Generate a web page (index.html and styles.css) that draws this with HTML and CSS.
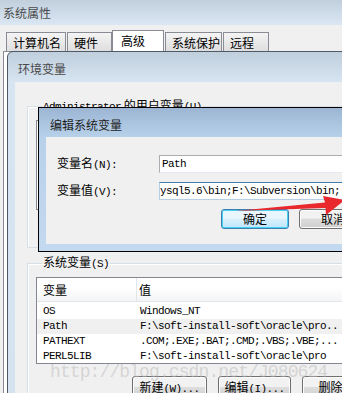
FILE: index.html
```html
<!DOCTYPE html>
<html lang="zh-CN">
<head>
    <meta charset="UTF-8">
    <title>编辑系统变量</title>
    <link rel="stylesheet" href="styles.css">
</head>
<body>
    <!-- System properties window (back) -->
    <div class="win sys">
        <div class="title">系统属性</div>
        <div class="tabs">
            <div class="tab t1">计算机名</div>
            <div class="tab t2">硬件</div>
            <div class="tab t3 on">高级</div>
            <div class="tab t4">系统保护</div>
            <div class="tab t5">远程</div>
        </div>
        <div class="page"></div>
    </div>

    <!-- Environment variables window -->
    <div class="win env">
        <div class="title">环境变量</div>
        <div class="body">
            <fieldset class="group user">
                <legend><span class="m">Administrator</span> 的用户变量<span class="m">(U)</span></legend>
                <div class="list short"></div>
            </fieldset>

            <fieldset class="group sysvars">
                <legend>系统变量<span class="m">(S)</span></legend>
                <div class="list">
                    <div class="head">
                        <div class="c1">变量</div>
                        <div class="c2">值</div>
                    </div>
                    <div class="rows m">
                        <div class="row"><div class="c1">OS</div><div class="c2">Windows_NT</div></div>
                        <div class="row sel"><div class="c1">Path</div><div class="c2">F:\soft-install-soft\oracle\pro..</div></div>
                        <div class="row"><div class="c1">PATHEXT</div><div class="c2">.COM;.EXE;.BAT;.CMD;.VBS;.VBE;...</div></div>
                        <div class="row"><div class="c1">PERL5LIB</div><div class="c2">F:\soft-install-soft\oracle\pro</div></div>
                    </div>
                </div>
                <div class="btns">
                    <div class="btn">新建<span class="m">(W)...</span></div>
                    <div class="btn">编辑<span class="m">(I)...</span></div>
                    <div class="btn">删除<span class="m">(L)</span></div>
                </div>
            </fieldset>
        </div>
    </div>

    <!-- Edit system variable dialog (front) -->
    <div class="win edit">
        <div class="title">编辑系统变量</div>
        <div class="body">
            <div class="field">
                <label>变量名<span class="m">(N):</span></label>
                <div class="input m">Path</div>
            </div>
            <div class="field">
                <label>变量值<span class="m">(V):</span></label>
                <div class="input focus m">ysql5.6\bin;F:\Subversion\bin;</div>
            </div>
            <div class="actions">
                <div class="btn ok">确定</div>
                <div class="btn">取消</div>
            </div>
        </div>
    </div>

    <svg class="arrow" width="110" height="30" viewBox="0 0 110 30">
        <polygon points="0,18 90,9.5 88,3 110,7 91,22 90.5,15" fill="#e8282c"/>
    </svg>

    <div class="mark">http://blog.csdn.net/J080624</div>
</body>
</html>
```

FILE: styles.css
```css
* {
    box-sizing: border-box;
}

body {
    margin: 0;
    width: 342px;
    height: 393px;
    overflow: hidden;
    position: relative;
    background: #f0f0f0;
    font-family: "Noto Sans CJK SC", sans-serif;
    font-size: 12px;
    line-height: 14px;
    color: #000;
}

.m {
    font-family: "Liberation Mono", "Noto Sans CJK SC", monospace;
    font-size: 11px;
    letter-spacing: -0.6px;
}

.win {
    position: absolute;
}

.win .title {
    color: #4a4a4a;
    line-height: 14px;
}

/* system properties */
.sys {
    left: 0;
    top: 0;
    width: 360px;
    height: 400px;
    background: #f0f0f0;
}

.sys .title {
    height: 25px;
    padding: 6px 0 0 3px;
    background: linear-gradient(#c1cfdd, #dbe7f3);
}

.tabs {
    display: flex;
    align-items: flex-end;
    height: 26px;
    padding-left: 6px;
}

.tab {
    height: 19px;
    margin-right: 1px;
    padding: 3px 0 0 6px;
    border: 1px solid #898c95;
    border-bottom: none;
    background: linear-gradient(#f4f4f4, #dedede);
}

.tab.t1 { width: 60px; }
.tab.t2 { width: 45px; }
.tab.t3 { width: 52px; margin-right: 1px; }
.tab.t4 { width: 57px; }
.tab.t5 { width: 46px; }

.tab.on {
    height: 21px;
    padding: 3px 0 0 8px;
    background: #fff;
    margin-left: -1px;
}

.page {
    height: 360px;
    margin-left: 3px;
    border: 1px solid #898c95;
    background: #fff;
}

/* environment variables */
.env {
    left: 7px;
    top: 51px;
    width: 400px;
    height: 400px;
    padding-left: 7px;
    border: 1px solid #4f5a66;
    border-radius: 6px 0 0 0;
    background: linear-gradient(#c0cfdd, #d7e4f1 30px, #d5e3f1);
}

.env .title {
    height: 30px;
    padding: 10px 0 0 3px;
}

.env .body {
    height: 360px;
    padding: 16px 0 0 12px;
    background: #f0f0f0;
}

.group {
    margin: 0;
    padding: 0 0 0 8px;
    width: 360px;
    border: 1px solid #d5dfe5;
    box-shadow: inset 1px 1px 0 #fff;
}

.group legend {
    margin-left: 6px;
    padding: 0 1px;
    line-height: 14px;
}

.group.user {
    height: 150px;
}

.group.sysvars {
    height: 160px;
    margin-top: 7px;
}

.list {
    margin-top: 6px;
    width: 340px;
    height: 87px;
    border: 1px solid #828790;
    background: #fff;
    overflow: hidden;
}

.list.short {
    height: 90px;
}

.head {
    display: flex;
    height: 24px;
    line-height: 23px;
    border-bottom: 1px solid #e5e5e5;
    background: linear-gradient(#fff 40%, #f3f4f6);
}

.head .c1 {
    width: 100px;
    padding-left: 6px;
    border-right: 1px solid #e3e5e8;
}

.head .c2 {
    padding-left: 2px;
}

.rows {
    padding-top: 2px;
}

.row {
    display: flex;
    height: 15px;
    line-height: 15px;
    white-space: nowrap;
}

.row .c1 {
    width: 101px;
    padding-left: 6px;
}

.row .c2 {
    padding-left: 2px;
}

.row.sel {
    background: #f0f0f0;
}

.btns {
    display: flex;
    gap: 11px;
    margin: 12px 0 0 96px;
}

.btn {
    width: 75px;
    height: 23px;
    line-height: 19px;
    text-align: center;
    border: 1px solid #707070;
    border-radius: 3px;
    background: linear-gradient(#f2f2f2 45%, #dddddd 50%, #cfcfcf);
    box-shadow: inset 0 0 0 1px #fcfcfc;
}

.btns .btn:nth-child(2) {
    width: 73px;
}

/* edit dialog */
.edit {
    left: 38px;
    top: 107px;
    width: 330px;
    height: 145px;
    padding: 0 0 7px 7px;
    border: 1px solid #000;
    background: linear-gradient(#9cb5d3, #b8d1ea 29px, #c3d9ef);
}

.edit .title {
    height: 29px;
    padding: 10px 0 0 4px;
    color: #1e1e1e;
}

.edit .body {
    height: 107px;
    padding: 18px 0 0 11px;
    background: #f0f0f0;
}

.field {
    display: flex;
    align-items: center;
    height: 18px;
    margin-bottom: 9px;
}

.field label {
    width: 102px;
}

.input {
    width: 200px;
    height: 18px;
    padding: 0 0 0 2px;
    line-height: 16px;
    white-space: nowrap;
    overflow: hidden;
    background: #fff;
    border: 1px solid #e3e9ef;
    border-top-color: #abadb3;
    border-left-color: #abadb3;
}

.input.focus {
    padding-left: 0;
    border-color: #b5cfe7;
    border-top-color: #3d7bad;
}

.actions {
    display: flex;
    gap: 10px;
    margin: 6px 0 0 164px;
}

.actions .btn {
    width: 72px;
    height: 20px;
    line-height: 17px;
}

.btn.ok {
    border-color: #3c7fb1;
    background: linear-gradient(#eaf6fd 45%, #d9f0fc 50%, #bee6fd);
    box-shadow: inset 0 0 0 1px #48d0f0;
}

/* overlays */
.arrow {
    position: absolute;
    left: 235px;
    top: 193px;
}

.mark {
    position: absolute;
    left: 50px;
    top: 362px;
    font-family: "Liberation Mono", monospace;
    font-size: 18px;
    letter-spacing: -0.9px;
    line-height: 20px;
    color: rgba(185, 185, 185, 0.5);
}
```
